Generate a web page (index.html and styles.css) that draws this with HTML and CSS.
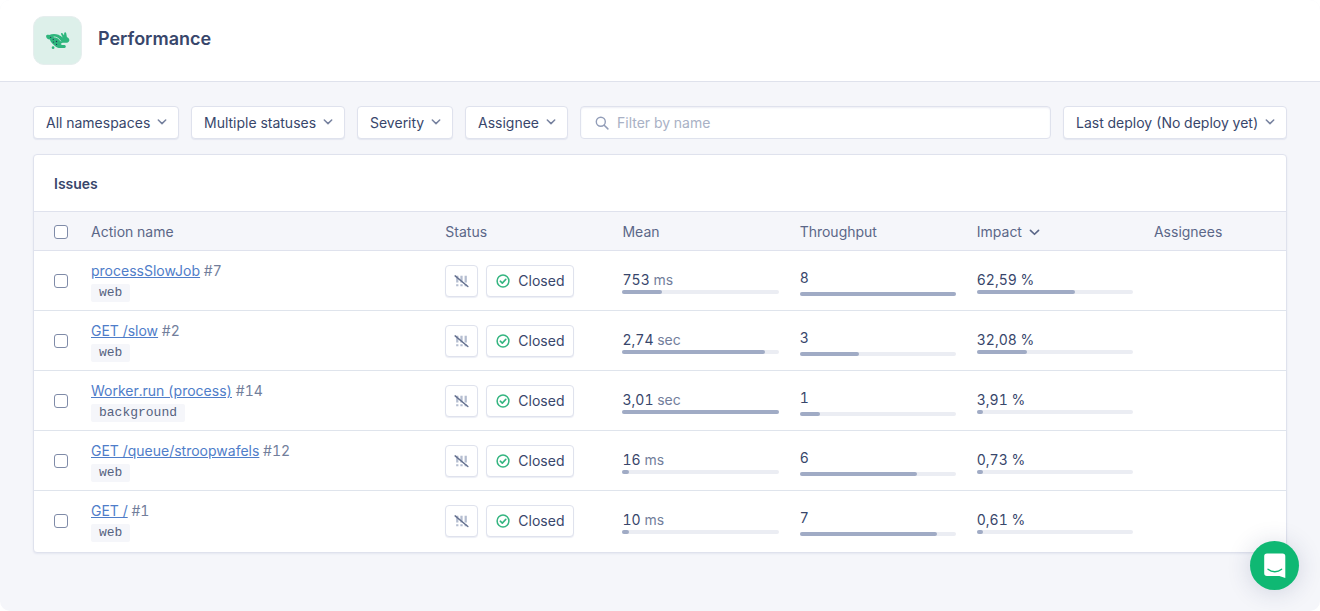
FILE: index.html
```
<!DOCTYPE html>
<html lang="en">
<head>
<meta charset="utf-8">
<meta name="viewport" content="width=device-width, initial-scale=1">
<title>Performance</title>
<link rel="stylesheet" href="styles.css">
</head>
<body>
<svg class="sprite" aria-hidden="true">
  <symbol id="chevron" viewBox="0 0 10 10"><path d="M1.300 3l3.700 3.600L8.700 3" fill="none" stroke="currentColor" stroke-width="1.500" stroke-linecap="round" stroke-linejoin="round"/></symbol>
  <symbol id="check" viewBox="0 0 14 14"><circle cx="7" cy="7" r="5.900" fill="none" stroke="currentColor" stroke-width="1.500"/><path d="M4.300 7.200l2 1.900 3.500-3.700" fill="none" stroke="currentColor" stroke-width="1.600" stroke-linecap="round" stroke-linejoin="round"/></symbol>
  <symbol id="mute" viewBox="0 0 16 14"><path d="M3.500 1.500v7M8 1.500v7M12.500 1.500v7M3.500 10.500v2M8 10.500v2M12.500 10.500v2" fill="none" stroke="#b4bdd0" stroke-width="2.400"/><path d="M1.200 1.500l13.600 11.300" fill="none" stroke="#65718f" stroke-width="1.500" stroke-linecap="round"/></symbol>
</svg>
<div class="page">
  <header class="topbar">
    <span class="logo">
      <svg viewBox="0 0 48 48" aria-hidden="true">
        <path fill="#2eb67d" d="M12.300 19.300c.3-1.300 2-1.600 3.200-.9 2.500-1.300 6.500-1.500 9.500-.2 1.800.8 3 1.900 4.300 2.700l-1.600-3.200c-.4-1.300 1-1.800 1.800-.7l1.200 1.800.1-2.300c.3-1.400 1.900-1.300 2.100 0l.7 3.800c1.700.8 2.700 2.200 2.500 3.700-.3 1.800-2.300 2.600-4.600 2.300-1.200 0-2.100-.1-3 .3l-1.300 1.100 1.400.9h2.600c1.600.1 1.800 2.900 0 3h-6c-2.200-.3-3.700-1.700-5.200-3.300-1.900-1.700-3.200-3.200-3.800-5.300-2.100-.1-4.100-1.900-3.900-3.700z"/>
        <circle cx="19.500" cy="31.300" r="1.400" fill="#2eb67d"/>
        <path d="M20.500 20.300c3 .2 5 1.600 6.700 4.200" fill="none" stroke="#ddf0ea" stroke-width=".8" stroke-linecap="round"/>
        <g fill="#23385a"><circle cx="17" cy="20.800" r=".7"/><circle cx="19.700" cy="22.800" r=".7"/><circle cx="19.800" cy="25.600" r=".6"/><circle cx="23" cy="25" r=".7"/><circle cx="23" cy="28" r=".6"/></g>
      </svg>
    </span>
    <h1 class="title">Performance</h1>
  </header>
  <main class="content">
    <form class="filters">
      <span class="picker"><select class="select" aria-label="Namespace"><option>All namespaces</option></select><svg class="chevron"><use href="#chevron"/></svg></span>
      <span class="picker"><select class="select" aria-label="Status"><option>Multiple statuses</option></select><svg class="chevron"><use href="#chevron"/></svg></span>
      <span class="picker"><select class="select" aria-label="Severity"><option>Severity</option></select><svg class="chevron"><use href="#chevron"/></svg></span>
      <span class="picker"><select class="select" aria-label="Assignee"><option>Assignee</option></select><svg class="chevron"><use href="#chevron"/></svg></span>
      <label class="search">
        <svg class="search-icon" viewBox="0 0 14 14" aria-hidden="true"><circle cx="5.800" cy="5.800" r="4.500" fill="none" stroke="currentColor" stroke-width="1.400"/><path d="M9.200 9.200l3.700 3.700" stroke="currentColor" stroke-width="1.500" stroke-linecap="round"/></svg>
        <input class="search-input" type="text" placeholder="Filter by name" aria-label="Filter by name">
      </label>
      <span class="picker"><select class="select" aria-label="Time range"><option>Last deploy (No deploy yet)</option></select><svg class="chevron"><use href="#chevron"/></svg></span>
    </form>
    <section class="card">
      <h2 class="card-title">Issues</h2>
      <table class="issues">
        <colgroup><col class="col-check"><col class="col-name"><col class="col-data"><col class="col-data"><col class="col-data"><col class="col-data"><col></colgroup>
        <thead>
          <tr><th><input class="check" type="checkbox" aria-label="Select all"></th><th>Action name</th><th>Status</th><th>Mean</th><th>Throughput</th><th><span class="sort">Impact<svg class="chevron-sort"><use href="#chevron"/></svg></span></th><th>Assignees</th></tr>
        </thead>
        <tbody>
          <tr>
            <td><input class="check" type="checkbox" aria-label="Select processSlowJob"></td>
            <td><div class="action"><a href="#">processSlowJob</a> #7</div><span class="tag">web</span></td>
            <td class="cell-status"><div class="status"><button class="btn btn-icon" type="button" aria-label="Severity"><svg class="mute"><use href="#mute"/></svg></button><button class="btn" type="button"><svg class="ok"><use href="#check"/></svg>Closed</button></div></td>
            <td><div class="metric">753 <span class="unit">ms</span></div><div class="bar"><div class="fill" style="width:25%"></div></div></td>
            <td><div class="metric count">8</div><div class="bar"><div class="fill" style="width:100%"></div></div></td>
            <td><div class="metric">62,59 %</div><div class="bar"><div class="fill" style="width:63%"></div></div></td>
            <td></td>
          </tr>
          <tr>
            <td><input class="check" type="checkbox" aria-label="Select GET /slow"></td>
            <td><div class="action"><a href="#">GET /slow</a> #2</div><span class="tag">web</span></td>
            <td class="cell-status"><div class="status"><button class="btn btn-icon" type="button" aria-label="Severity"><svg class="mute"><use href="#mute"/></svg></button><button class="btn" type="button"><svg class="ok"><use href="#check"/></svg>Closed</button></div></td>
            <td><div class="metric">2,74 <span class="unit">sec</span></div><div class="bar"><div class="fill" style="width:91%"></div></div></td>
            <td><div class="metric count">3</div><div class="bar"><div class="fill" style="width:38%"></div></div></td>
            <td><div class="metric">32,08 %</div><div class="bar"><div class="fill" style="width:32%"></div></div></td>
            <td></td>
          </tr>
          <tr>
            <td><input class="check" type="checkbox" aria-label="Select Worker.run (process)"></td>
            <td><div class="action"><a href="#">Worker.run (process)</a> #14</div><span class="tag">background</span></td>
            <td class="cell-status"><div class="status"><button class="btn btn-icon" type="button" aria-label="Severity"><svg class="mute"><use href="#mute"/></svg></button><button class="btn" type="button"><svg class="ok"><use href="#check"/></svg>Closed</button></div></td>
            <td><div class="metric">3,01 <span class="unit">sec</span></div><div class="bar"><div class="fill" style="width:100%"></div></div></td>
            <td><div class="metric count">1</div><div class="bar"><div class="fill" style="width:13%"></div></div></td>
            <td><div class="metric">3,91 %</div><div class="bar"><div class="fill" style="width:4%"></div></div></td>
            <td></td>
          </tr>
          <tr>
            <td><input class="check" type="checkbox" aria-label="Select GET /queue/stroopwafels"></td>
            <td><div class="action"><a href="#">GET /queue/stroopwafels</a> #12</div><span class="tag">web</span></td>
            <td class="cell-status"><div class="status"><button class="btn btn-icon" type="button" aria-label="Severity"><svg class="mute"><use href="#mute"/></svg></button><button class="btn" type="button"><svg class="ok"><use href="#check"/></svg>Closed</button></div></td>
            <td><div class="metric">16 <span class="unit">ms</span></div><div class="bar"><div class="fill" style="width:4%"></div></div></td>
            <td><div class="metric count">6</div><div class="bar"><div class="fill" style="width:75%"></div></div></td>
            <td><div class="metric">0,73 %</div><div class="bar"><div class="fill" style="width:4%"></div></div></td>
            <td></td>
          </tr>
          <tr>
            <td><input class="check" type="checkbox" aria-label="Select GET /"></td>
            <td><div class="action"><a href="#">GET /</a> #1</div><span class="tag">web</span></td>
            <td class="cell-status"><div class="status"><button class="btn btn-icon" type="button" aria-label="Severity"><svg class="mute"><use href="#mute"/></svg></button><button class="btn" type="button"><svg class="ok"><use href="#check"/></svg>Closed</button></div></td>
            <td><div class="metric">10 <span class="unit">ms</span></div><div class="bar"><div class="fill" style="width:4%"></div></div></td>
            <td><div class="metric count">7</div><div class="bar"><div class="fill" style="width:88%"></div></div></td>
            <td><div class="metric">0,61 %</div><div class="bar"><div class="fill" style="width:4%"></div></div></td>
            <td></td>
          </tr>
        </tbody>
      </table>
    </section>
  </main>
</div>
<button class="chat" type="button" aria-label="Open chat">
  <svg viewBox="0 0 24 28" aria-hidden="true"><path d="M4 1.500h15.500a2.800 2.800 0 0 1 2.800 2.800V26l-6-2H4a2.800 2.800 0 0 1-2.800-2.800V4.300A2.800 2.800 0 0 1 4 1.500z" fill="#fff"/><path d="M5 17.300c4 3.300 9.600 3.300 13.600 0" fill="none" stroke="#0fb873" stroke-width="1.400" stroke-linecap="round"/></svg>
</button>
</body>
</html>
```
FILE: styles.css
```
* { box-sizing: border-box; }
body {
  margin: 0;
  background: #fff;
  color: #38466b;
  font: 14px/20px Inter, "Liberation Sans", sans-serif;
  font-variant-numeric: tabular-nums;
}
.sprite { display: none; }
.page {
  min-height: 100vh;
  border-radius: 10px;
  background: #f5f6fa;
  overflow: hidden;
}
.topbar {
  display: flex;
  align-items: center;
  gap: 16px;
  padding: 16px 33px;
  border-bottom: 1px solid #dfe2ec;
  background: #fff;
}
.logo {
  width: 49px;
  height: 49px;
  border: 1px solid #e6eeee;
  border-radius: 11px;
  background: #ddf0ea;
}
.logo svg { display: block; width: 100%; height: 100%; }
.title { margin: 0; padding-bottom: 3px; font-size: 18px; line-height: 24px; font-weight: 600; }
.content { padding: 24px 33px; }
.filters { display: flex; gap: 12px; margin-bottom: 15px; }
.picker { display: grid; align-items: center; }
.picker > * { grid-area: 1 / 1; }
.select {
  height: 33px;
  padding: 0 27px 0 12px;
  border: 1px solid #dfe2ed;
  border-radius: 4px;
  background: #fff;
  box-shadow: 0 1px 1px #e4e7f0;
  color: inherit;
  font: inherit;
  appearance: none;
}
.chevron {
  justify-self: end;
  width: 10px;
  height: 10px;
  margin: 0 12px 2px 0;
  color: #77829f;
  pointer-events: none;
}
.search {
  display: flex;
  flex: 1;
  align-items: center;
  gap: 8px;
  min-width: 0;
  height: 33px;
  padding: 0 14px;
  border: 1px solid #dfe2ed;
  border-radius: 4px;
  background: #fff;
  box-shadow: inset 0 1px 2px #eceef5;
}
.search-icon { flex: none; width: 14px; height: 14px; color: #929db8; }
.search-input {
  flex: 1;
  min-width: 0;
  padding: 0;
  border: 0;
  outline: 0;
  background: none;
  color: inherit;
  font: inherit;
}
.search-input::placeholder { color: #a9b1c5; opacity: 1; }
.card {
  padding-bottom: 1px;
  border: 1px solid #dfe2ed;
  border-radius: 4px;
  background: #fff;
  box-shadow: 0 1px 2px #e4e7f0;
}
.card-title {
  margin: 0;
  padding: 19px 20px 17px;
  font-size: 14px;
  line-height: 20px;
  font-weight: 600;
}
.issues { width: 100%; border-collapse: collapse; table-layout: fixed; }
.col-check { width: 57px; }
.col-name { width: 28.3%; }
.col-data { width: 14.15%; }
.issues th {
  height: 39px;
  padding: 2px 21px 0 0;
  border: solid #dfe2ed;
  border-width: 1px 0;
  background: #f5f6fa;
  color: #5b6788;
  font-weight: 400;
  text-align: left;
}
.issues td {
  height: 60px;
  padding: 2px 21px 0 0;
  border-top: 1px solid #dfe4ec;
}
.issues .cell-status { padding-top: 0; }
.issues th:first-child,
.issues td:first-child { padding: 1px 0 0 20px; }
.check {
  display: block;
  width: 14px;
  height: 14px;
  margin: 0;
  border: 1px solid #7f8ba8;
  border-radius: 3px;
  background: #fff;
  appearance: none;
}
.check:checked { background: #4f7dc9; }
.sort { display: inline-flex; align-items: center; gap: 7px; }
.chevron-sort { width: 11px; height: 11px; }
.action { color: #727e9b; white-space: nowrap; }
.action a { color: #4f7dc9; text-decoration: underline; }
.tag {
  display: block;
  width: fit-content;
  margin-top: 3px;
  padding: 0 8px;
  border-radius: 2px;
  background: #f5f6fa;
  color: #55627f;
  font: 13px/18px "Liberation Mono", monospace;
}
.status { display: flex; gap: 8px; }
.btn {
  display: flex;
  align-items: center;
  gap: 8px;
  height: 32px;
  padding: 0 9px;
  border: 1px solid #dfe2ed;
  border-radius: 4px;
  background: #fff;
  box-shadow: 0 1px 1px #eceef5;
  color: inherit;
  font: inherit;
}
.btn-icon { padding: 0 8px; }
.mute { width: 15px; height: 14px; }
.ok { width: 14px; height: 14px; color: #35b581; }
.metric { line-height: 20px; }
.count { margin-bottom: 4px; }
.unit { color: #727e9b; }
.bar { height: 4px; border-radius: 2px; background: #ebedf3; }
.fill { height: 4px; border-radius: 2px; background: #a0abc5; }
.chat {
  position: fixed;
  right: 21px;
  bottom: 21px;
  display: grid;
  place-items: center;
  width: 49px;
  height: 49px;
  padding: 0;
  border: 0;
  border-radius: 50%;
  background: #0fb873;
  box-shadow: 0 2px 24px rgba(40, 50, 100, 0.18);
}
.chat svg { width: 24px; height: 28px; }
```
